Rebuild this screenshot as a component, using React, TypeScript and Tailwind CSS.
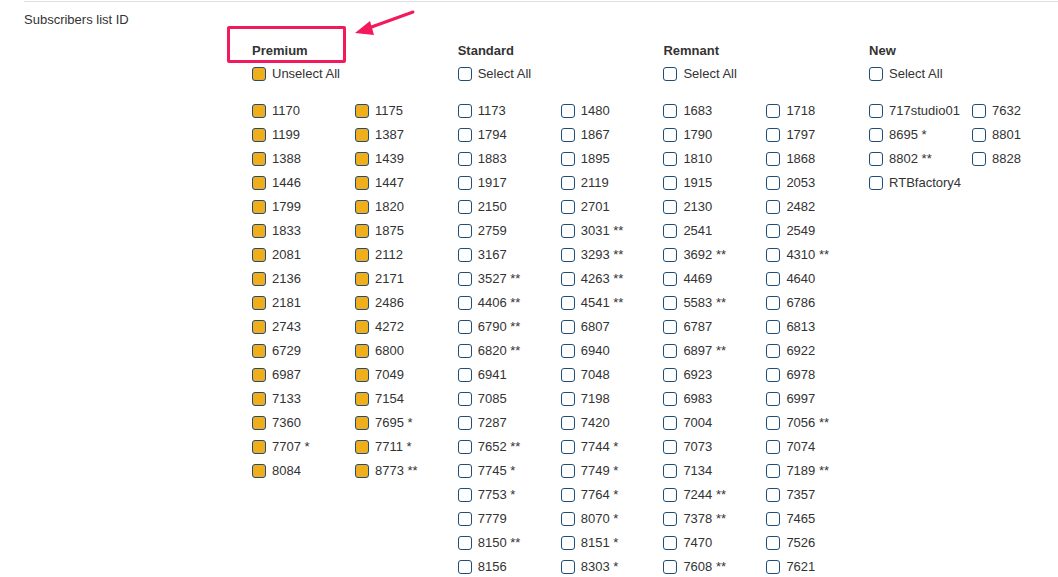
const groups = [
  {
    title: "Premium",
    all: "Unselect All",
    checked: true,
    items: [
      "1170", "1175", "1199", "1387", "1388", "1439", "1446", "1447", "1799", "1820",
      "1833", "1875", "2081", "2112", "2136", "2171", "2181", "2486", "2743", "4272",
      "6729", "6800", "6987", "7049", "7133", "7154", "7360", "7695 *", "7707 *", "7711 *",
      "8084", "8773 **",
    ],
  },
  {
    title: "Standard",
    all: "Select All",
    checked: false,
    items: [
      "1173", "1480", "1794", "1867", "1883", "1895", "1917", "2119", "2150", "2701",
      "2759", "3031 **", "3167", "3293 **", "3527 **", "4263 **", "4406 **", "4541 **",
      "6790 **", "6807", "6820 **", "6940", "6941", "7048", "7085", "7198", "7287", "7420",
      "7652 **", "7744 *", "7745 *", "7749 *", "7753 *", "7764 *", "7779", "8070 *",
      "8150 **", "8151 *", "8156", "8303 *",
    ],
  },
  {
    title: "Remnant",
    all: "Select All",
    checked: false,
    items: [
      "1683", "1718", "1790", "1797", "1810", "1868", "1915", "2053", "2130", "2482",
      "2541", "2549", "3692 **", "4310 **", "4469", "4640", "5583 **", "6786", "6787", "6813",
      "6897 **", "6922", "6923", "6978", "6983", "6997", "7004", "7056 **", "7073", "7074",
      "7134", "7189 **", "7244 **", "7357", "7378 **", "7465", "7470", "7526", "7608 **", "7621",
    ],
  },
  {
    title: "New",
    all: "Select All",
    checked: false,
    items: ["717studio01", "7632", "8695 *", "8801", "8802 **", "8828", "RTBfactory4"],
  },
]

function Box({ checked }: { checked: boolean }) {
  return (
    <span
      className={`w-[14px] h-[14px] shrink-0 rounded-[3px] border-[1.5px] border-[#1f4e79] ${
        checked ? "bg-[#f0ad1c]" : "bg-white"
      }`}
    />
  )
}

function Check({ label, checked }: { label: string; checked: boolean }) {
  return (
    <div className="flex items-center gap-[6px] h-[24px] whitespace-nowrap">
      <Box checked={checked} />
      <span>{label}</span>
    </div>
  )
}

export default function App() {
  return (
    <div
      className="relative w-[1058px] h-[577px] overflow-hidden bg-white text-[13px] text-[#333]"
      style={{ fontFamily: '"Liberation Sans", Arial, sans-serif' }}
    >
      <div className="ml-6 border-t border-[#dee2e6] mt-px" />
      <div className="flex">
        <div className="w-[228px] shrink-0 pl-6 pt-[10px] leading-[16px]">Subscribers list ID</div>
        <div className="flex pt-[40px]">
          {groups.map((g) => (
            <div key={g.title} className="w-[205.7px] shrink-0 pl-6">
              <div className="font-bold leading-[18px]">{g.title}</div>
              <div className="mt-[2px]">
                <Check label={g.all} checked={g.checked} />
              </div>
              <div className="grid grid-cols-[103px_103px] mt-[13px]">
                {g.items.map((it) => (
                  <Check key={it} label={it} checked={g.checked} />
                ))}
              </div>
            </div>
          ))}
        </div>
      </div>

      {/* annotation */}
      <div className="absolute left-[227px] top-[26px] w-[119px] h-[37px] border-[3px] border-[#f2195d] rounded-[2px]" />
      <svg className="absolute left-[350px] top-[6px]" width="70" height="34" viewBox="0 0 70 34">
        <line x1="63" y1="6" x2="16" y2="23" stroke="#f2195d" strokeWidth="3" strokeLinecap="round" />
        <polygon points="5,27 20,15 24,29" fill="#f2195d" />
      </svg>
    </div>
  )
}
